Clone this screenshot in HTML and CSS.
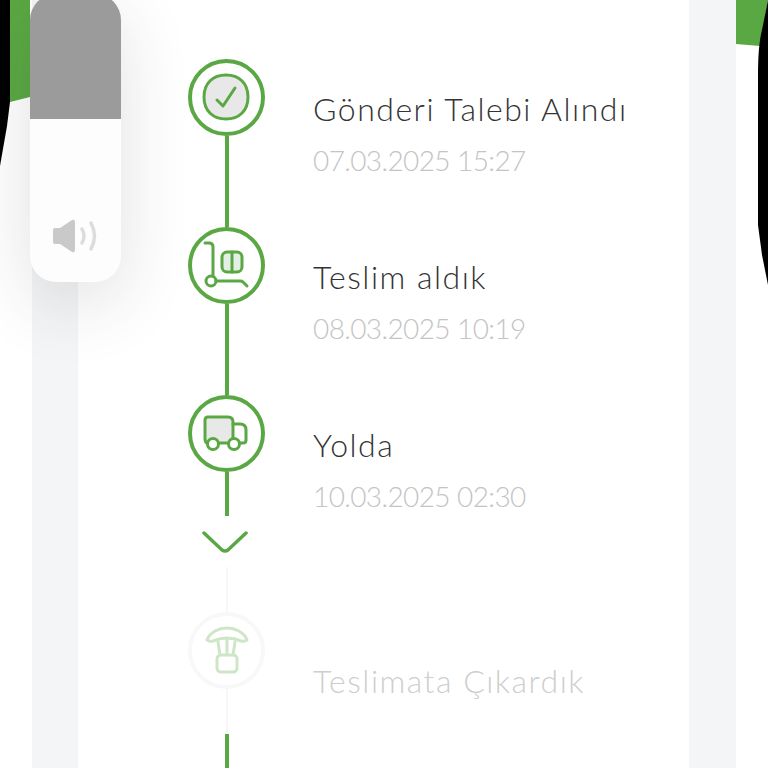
FILE: index.html
```html
<!DOCTYPE html>
<html lang="tr">
<head>
  <meta charset="UTF-8">
  <meta name="viewport" content="width=device-width, initial-scale=1.0">
  <title>Gönderi Takibi</title>
  <link rel="stylesheet" href="styles.css">
</head>
<body>
  <div class="band">
    <div class="card">

      <div class="step">
        <div class="node">
          <svg viewBox="4 4 69 69" class="icon">
            <path d="M38 16c13 0 22 8 22 22s-9 22-22 22-22-8-22-22 9-22 22-22z" fill="#e8e8e8"/>
            <path d="M29 41l6 6 12-18"/>
          </svg>
          <div class="line line-full"></div>
        </div>
        <div class="info">
          <div class="title">Gönderi Talebi Alındı</div>
          <div class="date">07.03.2025 15:27</div>
        </div>
      </div>

      <div class="step">
        <div class="node">
          <svg viewBox="4 4 69 69" class="icon">
            <rect x="34" y="25" width="20" height="20" rx="5" fill="#e4efe6"/>
            <path d="M44 25v20"/>
            <path d="M17 16h4q4 0 4 4v29"/>
            <circle cx="23" cy="54" r="5"/>
            <path d="M28 54h24q2 0 3 1l4 4"/>
          </svg>
          <div class="line line-full"></div>
        </div>
        <div class="info">
          <div class="title">Teslim aldık</div>
          <div class="date">08.03.2025 10:19</div>
        </div>
      </div>

      <div class="step">
        <div class="node">
          <svg viewBox="4 4 69 69" class="icon">
            <path d="M20 22h20q5 0 5 5v21H20q-3 0-3-4V25q0-3 3-3z" fill="#e8e8e8"/>
            <path d="M45 29h7q6 0 6 6v10q0 3-3 3h-3"/>
            <circle cx="25" cy="49" r="5.5" fill="#fff"/>
            <circle cx="46" cy="49" r="5.5" fill="#fff"/>
          </svg>
          <div class="line line-short"></div>
          <svg viewBox="0 0 46 22" class="chevron">
            <path d="M2 2l18 17q3 2 6 0L44 2"/>
          </svg>
          <div class="line line-pale line-gap"></div>
        </div>
        <div class="info">
          <div class="title">Yolda</div>
          <div class="date">10.03.2025 02:30</div>
        </div>
      </div>

      <div class="step step-pending">
        <div class="node">
          <svg viewBox="4 4 69 69" class="icon">
            <path d="M19 28c3-8 12-12 20-12s17 4 20 12q-3 2-6 1-7-3-14-3t-14 3q-3 1-6-1z"/>
            <path d="M30 30l2 13M39 27v16M47 30l-2 13"/>
            <rect x="29" y="43" width="20" height="17" rx="4"/>
          </svg>
          <div class="line line-pale"></div>
          <div class="line line-tail"></div>
        </div>
        <div class="info">
          <div class="title">Teslimata Çıkardık</div>
        </div>
      </div>

    </div>
  </div>

  <!-- telefon kenarları -->
  <svg class="edge edge-left" viewBox="0 0 32 170">
    <path d="M10 0h20v97l-20 5z" fill="#5aa843"/>
    <path d="M0 0h10v102l-3 24-7 40z" fill="#000"/>
  </svg>
  <svg class="edge edge-right" viewBox="0 0 32 290">
    <path d="M0 0h32l-8 46L0 44z" fill="#5aa843"/>
    <path d="M32 0v285l-6-30-4-30V75q0-30 4-45z" fill="#000"/>
  </svg>

  <!-- ses göstergesi -->
  <div class="volume">
    <div class="volume-level"></div>
    <div class="volume-empty">
      <svg viewBox="0 0 46 36" class="volume-icon">
        <path d="M2 12q0-2 2-2h5l12-8q3-1 3 2v28q0 3-3 2L9 26H4q-2 0-2-2z" fill="#c9c9c9"/>
        <path d="M31 11q4 7 0 14M40 5q7 13 0 26" class="volume-wave"/>
      </svg>
    </div>
  </div>
</body>
</html>
```

FILE: styles.css
```css
* {
  box-sizing: border-box;
}
html, body {
  height: 768px;
  overflow: hidden;
}
body {
  margin: 0;
  background-color: #fff;
  font-family: "Lato", "Liberation Sans", sans-serif;
}
.band {
  margin: 0 32px;
  padding: 0 47px 0 46px;
  height: 768px;
  background-color: #f4f5f7;
}
.card {
  height: 768px;
  padding: 59px 0 0 110px;
  background-color: #fff;
  overflow: hidden;
}
.step {
  display: flex;
  gap: 48px;
}
.node {
  display: flex;
  flex-direction: column;
  align-items: center;
  width: 77px;
  flex-shrink: 0;
}
.icon {
  display: block;
  flex-shrink: 0;
  width: 77px;
  height: 77px;
  border: 4px solid #5aa843;
  border-radius: 50%;
  fill: none;
  stroke: #5aa843;
  stroke-width: 3;
  stroke-linecap: round;
  stroke-linejoin: round;
  overflow: visible;
}
.line {
  width: 4px;
  background-color: #5aa843;
}
.line-full {
  height: 91px;
}
.line-short {
  height: 44px;
}
.line-pale {
  width: 2px;
  height: 45px;
  background-color: #f7f7f7;
}
.line-gap {
  margin-top: 14px;
}
.line-tail {
  height: 40px;
}
.chevron {
  display: block;
  width: 46px;
  height: 22px;
  margin: 15px 3px 0 0;
  fill: none;
  stroke: #5aa843;
  stroke-width: 3.5;
  stroke-linecap: round;
}
.info {
  padding-top: 32px;
}
.title {
  font-size: 32px;
  line-height: 36px;
  font-weight: 300;
  letter-spacing: 1.5px;
  color: #333;
}
.date {
  margin-top: 18px;
  font-size: 28px;
  line-height: 30px;
  font-weight: 300;
  letter-spacing: -0.6px;
  color: #c4c4c4;
}
.step-pending .icon {
  border-color: #f8f8f8;
  stroke: #cfe5c8;
}
.step-pending .info {
  padding-top: 51px;
}
.step-pending .title {
  color: #cecece;
}
.edge {
  position: absolute;
  top: 0;
  display: block;
}
.edge-left {
  left: 0;
  width: 32px;
  height: 170px;
}
.edge-right {
  right: 0;
  width: 32px;
  height: 290px;
}
.volume {
  position: absolute;
  left: 30px;
  top: -6px;
  width: 91px;
  height: 288px;
  display: flex;
  flex-direction: column;
  border-radius: 26px;
  overflow: hidden;
  background-color: #fdfdfd;
  box-shadow: 0 20px 70px rgba(40, 40, 40, 0.14);
}
.volume-level {
  height: 125px;
  background-color: #9b9b9b;
}
.volume-empty {
  flex: 1;
  display: flex;
  justify-content: center;
  align-items: flex-end;
  padding: 0 4px 28px 0;
}
.volume-icon {
  display: block;
  width: 46px;
  height: 36px;
}
.volume-wave {
  fill: none;
  stroke: #dcdcdc;
  stroke-width: 3.5;
  stroke-linecap: round;
}
```
